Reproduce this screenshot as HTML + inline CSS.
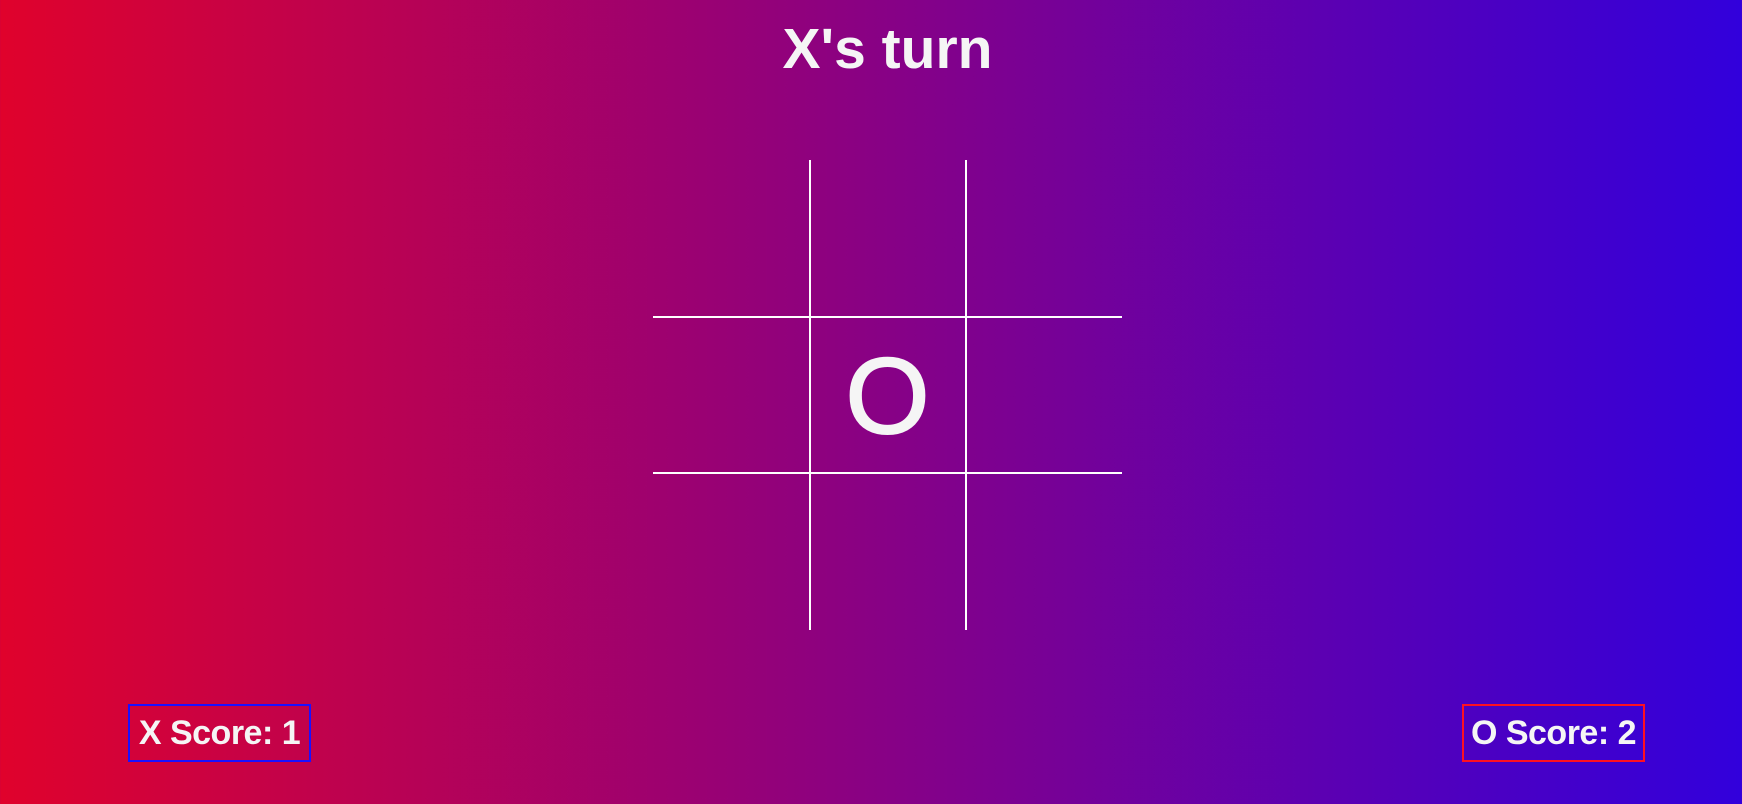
<!DOCTYPE html>
<html><head><style>
html,body{margin:0;width:1742px;height:804px;overflow:hidden;}
body{background:linear-gradient(to right,#e0022c,#3200dc);font-family:"Liberation Sans",sans-serif;color:#f5f5f5;position:relative;}
.title{position:absolute;left:0;width:1775px;text-align:center;top:14px;font-size:57px;font-weight:bold;line-height:70px;}
.v{position:absolute;width:2px;background:#fff;top:160px;height:470px;}
.h{position:absolute;height:2px;background:#fff;left:653px;width:469px;}
.o{position:absolute;left:809px;width:157px;top:318px;height:155px;text-align:center;font-size:108px;line-height:155px;-webkit-text-stroke:2px #f5f5f5;}
.box{position:absolute;top:704px;height:54px;border:2px solid;font-size:34px;font-weight:bold;letter-spacing:-0.5px;line-height:54px;width:179px;text-align:center;white-space:nowrap;box-sizing:content-box;}
</style></head><body>
<div class="title">X's turn</div>
<div class="v" style="left:809px"></div>
<div class="v" style="left:965px"></div>
<div class="h" style="top:316px"></div>
<div class="h" style="top:472px"></div>
<div class="o">O</div>
<div class="box" style="left:128px;border-color:#1a10ff">X Score: 1</div>
<div class="box" style="left:1462px;border-color:#ff1020">O Score: 2</div>
</body></html>
